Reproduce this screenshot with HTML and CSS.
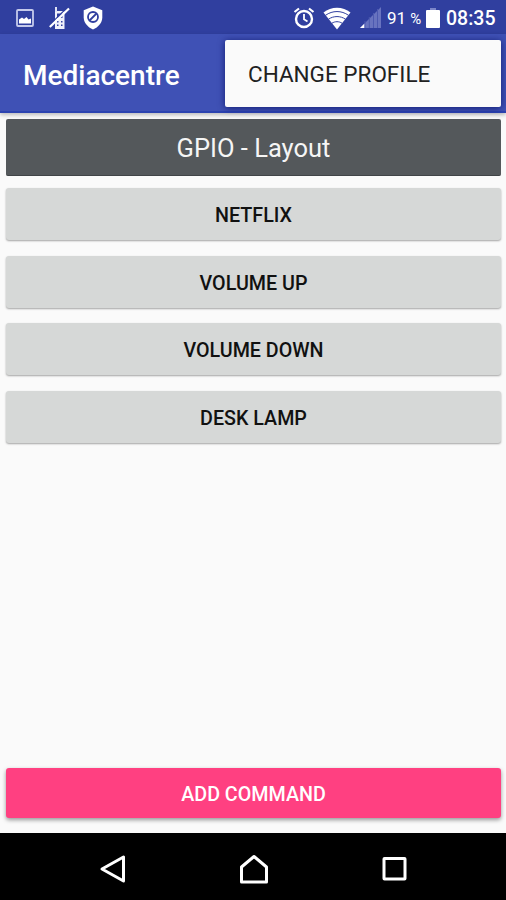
FILE: index.html
```
<!DOCTYPE html>
<html lang="en">
<head>
    <meta charset="UTF-8">
    <title>Mediacentre</title>
    <link rel="stylesheet" href="styles.css">
</head>
<body>
    <div class="status-bar">
        <svg class="icon-image" width="18" height="18" viewBox="0 0 18 18">
            <rect x="1" y="1" width="16" height="16" rx="1" fill="none" stroke="#c5caeb" stroke-width="1.8"/>
            <path d="M3 14.5v-4l3-2 2 1.5 2.5-2 2 2.5 2.5-1v5z" fill="#fff"/>
        </svg>
        <svg class="icon-muted" width="22" height="24" viewBox="0 0 22 24">
            <path d="M6 5h9.500v18H6z" fill="#f0f1fb"/>
            <path d="M7 1v5" stroke="#dfe2f5" stroke-width="2"/>
            <path d="M8 7.500h5.500V12H8zM8 15h1.500v1.500H8zM12 15h1.500v1.500H12zM8 18.500h1.500V20H8zM12 18.500h1.500V20H12z" fill="#303f9f"/>
            <path d="M0 19.500L18.800 1" stroke="#303f9f" stroke-width="1.2"/>
            <path d="M.8 21L20 2.500" stroke="#fff" stroke-width="2.2"/>
        </svg>
        <svg class="icon-shield" width="20" height="24" viewBox="0 0 20 24">
            <path d="M10 .5l9.300 3.800v7c0 5.500-4 10-9.300 12.200C4.700 21.300.7 16.800.7 11.300v-7z" fill="#fff"/>
            <circle cx="10" cy="11" r="5" fill="none" stroke="#303f9f" stroke-width="1.8"/>
            <path d="M6.500 14.500l7-7" stroke="#303f9f" stroke-width="1.8"/>
        </svg>
        <div class="spacer"></div>
        <svg class="icon-alarm" width="22" height="22" viewBox="0 0 22 22" fill="none" stroke="#fff">
            <circle cx="11" cy="12" r="8" stroke-width="2.4"/>
            <path d="M11 7v5.300l3.500 2.200" stroke-width="1.8"/>
            <path d="M1.500 5L6 1.500M20.500 5L16 1.500" stroke-width="2.2"/>
        </svg>
        <svg class="icon-wifi" width="28" height="24" viewBox="0 0 28 24">
            <path d="M14 23.500L.5 6.500C8 0 20 0 27.500 6.500z" fill="#fff"/>
            <path d="M2.500 9.300c7-5 16-5 23 0M5.500 13.200c5-3.500 12-3.500 17 0M9 17.200c3-2 7-2 10 0" fill="none" stroke="#303f9f" stroke-width="1"/>
        </svg>
        <svg class="icon-signal" width="22" height="21" viewBox="0 0 22 21">
            <path d="M0 21L21 0v21z" fill="#6873bf"/>
            <path d="M0 21l4.500-4.500V21z" fill="#fff"/>
            <path d="M5 14v7M9.300 10v11M13.500 6v15M17.500 2v19" stroke="#4c59b0" stroke-width="1"/>
        </svg>
        <span class="battery-text">91 <small>%</small></span>
        <svg class="icon-battery" width="14" height="20" viewBox="0 0 14 20">
            <path d="M4 0h6v3H4z" fill="#7c86c9"/>
            <rect y="2" width="14" height="18" rx="1" fill="#fff"/>
        </svg>
        <span class="clock">08:35</span>
    </div>

    <div class="app-bar">
        <h1>Mediacentre</h1>
        <div class="menu">CHANGE PROFILE</div>
    </div>

    <div class="content">
        <div class="layout-title">GPIO - Layout</div>
        <div class="commands">
            <button class="btn">NETFLIX</button>
            <button class="btn">VOLUME UP</button>
            <button class="btn">VOLUME DOWN</button>
            <button class="btn">DESK LAMP</button>
        </div>
        <button class="btn add-btn">ADD COMMAND</button>
    </div>

    <div class="nav-bar">
        <svg width="28" height="30" viewBox="0 0 28 30">
            <path d="M24.500 3v24L3 15z"/>
        </svg>
        <svg width="30" height="30" viewBox="0 0 30 30">
            <path d="M2.500 28V13L15 2.500 27.500 13v15z"/>
        </svg>
        <svg width="28" height="30" viewBox="0 0 28 30">
            <rect x="3" y="4.500" width="21" height="20.500" rx=".5"/>
        </svg>
    </div>
</body>
</html>
```

FILE: styles.css
```
* {
    box-sizing: border-box;
}

body {
    margin: 0;
    height: 100vh;
    display: flex;
    flex-direction: column;
    background: #fafafa;
    font-family: Roboto, sans-serif;
    overflow: hidden;
}

.status-bar {
    height: 34px;
    flex: none;
    display: flex;
    align-items: center;
    padding: 1px 10px 0 16px;
    background: #303f9f;
    color: #fff;
}

.status-bar svg,
.status-bar span {
    flex: none;
}

.icon-muted {
    margin-left: 15px;
}

.icon-shield {
    margin-left: 12px;
}

.spacer {
    flex: 1;
}

.icon-wifi {
    margin-left: 8px;
}

.icon-signal {
    margin-left: 9px;
}

.battery-text {
    width: 36px;
    margin-left: 5px;
    font-size: 17px;
    white-space: nowrap;
}

.battery-text small {
    font-size: 15px;
}

.icon-battery {
    margin-left: 3px;
}

.clock {
    width: 50px;
    margin-left: 6px;
    padding-top: 2px;
    font-size: 19.5px;
    font-weight: 500;
}

.app-bar {
    position: relative;
    z-index: 1;
    height: 79px;
    flex: none;
    display: flex;
    align-items: center;
    padding: 5px 23px 0;
    background: #3f51b5;
    border-bottom: 2px solid #2c43b0;
    box-shadow: 0 2px 4px rgba(0, 0, 0, 0.25);
    color: #fff;
}

.app-bar h1 {
    margin: 0;
    font-size: 28px;
    font-weight: 500;
}

/* Overflow menu, opens over the app bar */
.menu {
    position: absolute;
    top: 6px;
    right: 5px;
    width: 276px;
    height: 67px;
    padding-left: 23px;
    line-height: 68px;
    background: #fafafa;
    border-radius: 2px;
    box-shadow: 0 1px 7px rgba(0, 10, 90, 0.75);
    color: #212121;
    font-size: 22.5px;
}

.content {
    flex: 1;
    display: flex;
    flex-direction: column;
    padding: 6px 5px 15px 6px;
}

.layout-title {
    height: 57px;
    line-height: 59px;
    background: #54585b;
    border-bottom: 1px solid #404447;
    border-radius: 2px;
    color: #f5f5f5;
    font-size: 25.5px;
    text-align: center;
}

.commands {
    flex: 1;
    display: flex;
    flex-direction: column;
    gap: 15.5px;
    margin-top: 12px;
}

.btn {
    height: 52px;
    flex: none;
    padding: 3px 0 0;
    border: none;
    border-radius: 3px;
    background: #d6d8d7;
    box-shadow: 0 1px 2px rgba(0, 0, 0, 0.35);
    color: #111;
    font-family: inherit;
    font-size: 19.7px;
    font-weight: 500;
}

.add-btn {
    height: 50px;
    padding-top: 2px;
    background: #ff4081;
    box-shadow: 0 2px 4px rgba(0, 0, 0, 0.4);
    color: #fff;
}

.nav-bar {
    height: 67px;
    flex: none;
    display: flex;
    align-items: center;
    justify-content: space-between;
    padding: 4px 97px 0 99px;
    background: #000;
}

.nav-bar svg {
    fill: none;
    stroke: #fff;
    stroke-width: 3;
    stroke-linejoin: round;
}
```
